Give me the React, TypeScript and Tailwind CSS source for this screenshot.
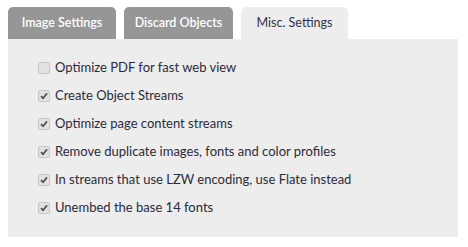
const tabs = [
  { label: "Image Settings", active: false, w: "w-[108px]" },
  { label: "Discard Objects", active: false, w: "w-[109px]" },
  { label: "Misc. Settings", active: true, w: "w-[107px]" },
]

const options = [
  { label: "Optimize PDF for fast web view", checked: false },
  { label: "Create Object Streams", checked: true },
  { label: "Optimize page content streams", checked: true },
  { label: "Remove duplicate images, fonts and color profiles", checked: true },
  { label: "In streams that use LZW encoding, use Flate instead", checked: true },
  { label: "Unembed the base 14 fonts", checked: true },
]

const Box = ({ checked }: { checked: boolean }) => (
  <span className="w-[12px] h-[12px] shrink-0 rounded-[2px] border border-[#c8c8c8] bg-[#e2e2e2] flex items-center justify-center">
    {checked && (
      <svg width="8" height="8" viewBox="0 0 8 8">
        <path d="M1 4.2 L3 6.3 L7 1.4" fill="none" stroke="#505050" strokeWidth="1.7" />
      </svg>
    )}
  </span>
)

export default function App() {
  return (
    <div className="w-[468px] h-[247px] bg-white pl-[8px] pt-[7px] font-['Lato','Liberation_Sans',sans-serif]">
      {/* Tabs */}
      <div className="flex gap-[8px] h-[32px]">
        {tabs.map((t) => (
          <div
            key={t.label}
            className={`${t.w} h-full rounded-t-[5px] flex items-center justify-center text-[12.5px] ${
              t.active ? "bg-[#ededed] text-[#333344]" : "bg-[#969696] text-white font-semibold"
            }`}
          >
            {t.label}
          </div>
        ))}
      </div>

      {/* Panel */}
      <div className="w-[450px] h-[198px] bg-[#ededed] pl-[30px] pt-[21px] flex flex-col gap-[12px]">
        {options.map((o) => (
          <label key={o.label} className="flex items-center gap-[5px] h-[16px] text-[13px] text-[#2b2b3a]">
            <Box checked={o.checked} />
            <span>{o.label}</span>
          </label>
        ))}
      </div>
    </div>
  )
}
